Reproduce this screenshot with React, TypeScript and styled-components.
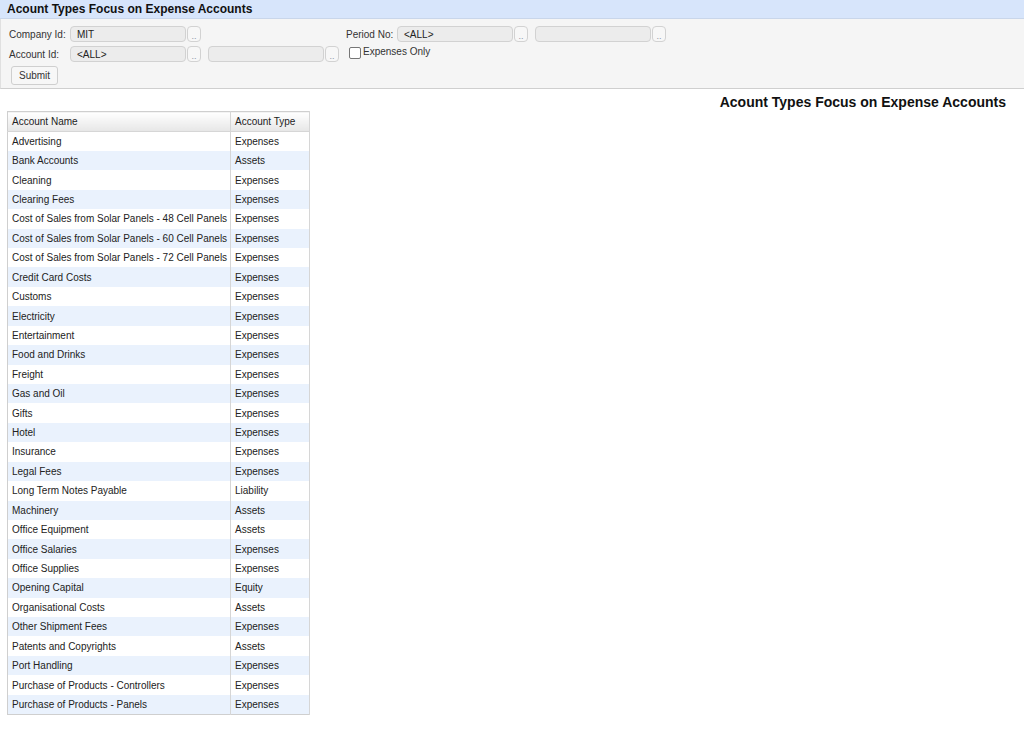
import styled, { createGlobalStyle } from 'styled-components';

const GlobalStyle = createGlobalStyle`
    html, body {
        margin: 0;
        padding: 0;
        background: #fff;
        font-family: "Liberation Sans", Arial, sans-serif;
        font-size: 10px;
        color: #222;
    }
`;

const accounts: [string, string][] = [
    ['Advertising', 'Expenses'],
    ['Bank Accounts', 'Assets'],
    ['Cleaning', 'Expenses'],
    ['Clearing Fees', 'Expenses'],
    ['Cost of Sales from Solar Panels - 48 Cell Panels', 'Expenses'],
    ['Cost of Sales from Solar Panels - 60 Cell Panels', 'Expenses'],
    ['Cost of Sales from Solar Panels - 72 Cell Panels', 'Expenses'],
    ['Credit Card Costs', 'Expenses'],
    ['Customs', 'Expenses'],
    ['Electricity', 'Expenses'],
    ['Entertainment', 'Expenses'],
    ['Food and Drinks', 'Expenses'],
    ['Freight', 'Expenses'],
    ['Gas and Oil', 'Expenses'],
    ['Gifts', 'Expenses'],
    ['Hotel', 'Expenses'],
    ['Insurance', 'Expenses'],
    ['Legal Fees', 'Expenses'],
    ['Long Term Notes Payable', 'Liability'],
    ['Machinery', 'Assets'],
    ['Office Equipment', 'Assets'],
    ['Office Salaries', 'Expenses'],
    ['Office Supplies', 'Expenses'],
    ['Opening Capital', 'Equity'],
    ['Organisational Costs', 'Assets'],
    ['Other Shipment Fees', 'Expenses'],
    ['Patents and Copyrights', 'Assets'],
    ['Port Handling', 'Expenses'],
    ['Purchase of Products - Controllers', 'Expenses'],
    ['Purchase of Products - Panels', 'Expenses'],
];

const App = () => {
    return (
        <>
            <GlobalStyle />
            <TitleBar>Acount Types Focus on Expense Accounts</TitleBar>
            <FilterPanel>
                <FieldRow>
                    <Field>
                        <Label>Company Id:</Label>
                        <Lookup>
                            <LookupInput>MIT</LookupInput>
                            <DotsButton>..</DotsButton>
                        </Lookup>
                    </Field>
                    <Field $offset={145}>
                        <Label $width={44}>Period No:</Label>
                        <Lookup>
                            <LookupInput>&lt;ALL&gt;</LookupInput>
                            <DotsButton>..</DotsButton>
                        </Lookup>
                        <Lookup>
                            <LookupInput />
                            <DotsButton>..</DotsButton>
                        </Lookup>
                    </Field>
                </FieldRow>
                <FieldRow>
                    <Field>
                        <Label>Account Id:</Label>
                        <Lookup>
                            <LookupInput>&lt;ALL&gt;</LookupInput>
                            <DotsButton>..</DotsButton>
                        </Lookup>
                        <Lookup>
                            <LookupInput />
                            <DotsButton>..</DotsButton>
                        </Lookup>
                    </Field>
                    <CheckLabel>
                        <CheckBox />
                        Expenses Only
                    </CheckLabel>
                </FieldRow>
                <SubmitButton>Submit</SubmitButton>
            </FilterPanel>
            <Report>
                <ReportTitle>Acount Types Focus on Expense Accounts</ReportTitle>
                <Table>
                    <colgroup>
                        <col style={{ width: 223 }} />
                        <col />
                    </colgroup>
                    <thead>
                        <tr>
                            <Th>Account Name</Th>
                            <Th>Account Type</Th>
                        </tr>
                    </thead>
                    <tbody>
                        {accounts.map(([name, type], i) => (
                            <Row key={name} $alt={i % 2 === 1}>
                                <Td>{name}</Td>
                                <Td>{type}</Td>
                            </Row>
                        ))}
                    </tbody>
                </Table>
            </Report>
        </>
    );
};

const TitleBar = styled.div`
    height: 19px;
    line-height: 19px;
    padding: 0 7px;
    background: #d7e5fb;
    font-size: 12px;
    font-weight: bold;
    color: #111;
    border-bottom: 1px solid #c9d6ea;
    box-sizing: border-box;
`;

const FilterPanel = styled.div`
    background: #f5f5f5;
    border-bottom: 1px solid #cfcfcf;
    border-left: 1px solid #e0e0e0;
    padding: 7px 0 2px 8px;
    height: 70px;
    box-sizing: border-box;
    display: flex;
    flex-direction: column;
    gap: 4px;
`;

const FieldRow = styled.div`
    display: flex;
    align-items: center;
    height: 16px;
`;

const Field = styled.div<{ $offset?: number }>`
    display: flex;
    align-items: center;
    gap: 7px;
    margin-left: ${(p) => (p.$offset ? `${p.$offset}px` : '0')};
`;

const Label = styled.span<{ $width?: number }>`
    width: ${(p) => (p.$width ? `${p.$width}px` : '54px')};
    color: #333;
    font-size: 10px;
    white-space: nowrap;
`;

const Lookup = styled.div`
    display: flex;
    align-items: center;
    gap: 1px;
`;

const LookupInput = styled.div`
    width: 116px;
    height: 16px;
    box-sizing: border-box;
    background: #ececec;
    border: 1px solid #d2d2d2;
    border-radius: 4px;
    padding: 0 6px;
    line-height: 15px;
    font-size: 10px;
    color: #222;
`;

const DotsButton = styled.div`
    width: 14px;
    height: 16px;
    box-sizing: border-box;
    background: #f7f7f7;
    border: 1px solid #d2d2d2;
    border-radius: 4px;
    font-size: 9px;
    line-height: 18px;
    text-align: center;
    color: #8a96a8;
`;

const CheckLabel = styled.label`
    display: flex;
    align-items: flex-start;
    gap: 2px;
    margin-left: 10px;
    font-size: 10px;
    color: #333;
    line-height: 11px;
    height: 16px;
`;

const CheckBox = styled.span`
    width: 12px;
    height: 12px;
    margin-top: 1px;
    box-sizing: border-box;
    border: 1px solid #767676;
    border-radius: 2px;
    background: #fff;
`;

const SubmitButton = styled.button`
    align-self: flex-start;
    margin-left: 2px;
    height: 19px;
    padding: 0 7px;
    background: #f7f7f7;
    border: 1px solid #cfcfcf;
    border-radius: 3px;
    font-family: "Liberation Sans", Arial, sans-serif;
    font-size: 10px;
    color: #333;
`;

const Report = styled.div`
    padding: 4px 18px 0 7px;
`;

const ReportTitle = styled.div`
    text-align: right;
    font-size: 14px;
    font-weight: bold;
    color: #111;
    height: 18px;
    line-height: 18px;
`;

const Table = styled.table`
    border-collapse: collapse;
    border: 1px solid #cfcfcf;
    font-size: 10px;
    width: 303px;
    table-layout: fixed;
`;

const Th = styled.th`
    height: 19px;
    padding: 0 4px;
    text-align: left;
    font-weight: normal;
    color: #222;
    white-space: nowrap;
    background: linear-gradient(#ffffff, #e6e6e6);
    border-right: 1px solid #d6d6d6;
    border-bottom: 1px solid #d6d6d6;
`;

const Row = styled.tr<{ $alt: boolean }>`
    height: 19.43px;
    background: ${(p) => (p.$alt ? '#eaf2fd' : '#fff')};
`;

const Td = styled.td`
    padding: 0 4px;
    color: #222;
    white-space: nowrap;
    border-right: 1px solid #d6d6d6;
`;

export default App;
